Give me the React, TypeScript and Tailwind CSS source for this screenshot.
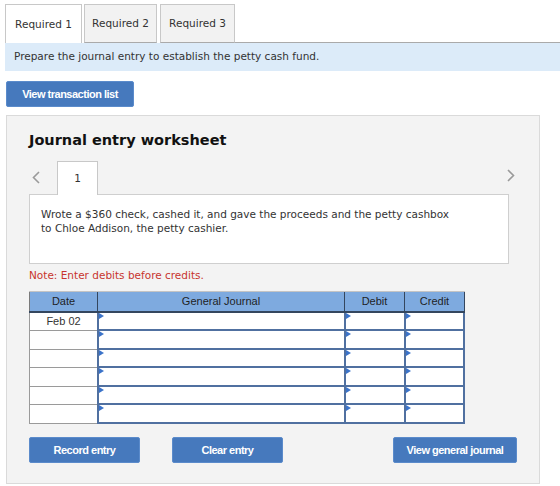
const rows = [0, 1, 2, 3, 4, 5];

// small blue marker in the corner of each entry cell
const Marker = () => (
  <span className="absolute left-0 top-0 w-0 h-0 border-t-[3px] border-b-[3px] border-l-[5px] border-t-transparent border-b-transparent border-l-[#3b73c9]" />
);

const Chevron = ({ dir }: { dir: 'left' | 'right' }) => (
  <svg width="8" height="13" viewBox="0 0 8 13" fill="none">
    <path
      d={dir === 'left' ? 'M7 1L1.5 6.5L7 12' : 'M1 1L6.5 6.5L1 12'}
      stroke="#9a9a9a"
      strokeWidth="1.6"
    />
  </svg>
);

const BlueButton = ({ label, className }: { label: string; className: string }) => (
  <button
    className={`h-[26px] rounded-[2px] bg-[#4679bd] border border-[#5b8bcb] text-white text-[11px] font-bold tracking-[-0.5px] font-['Liberation_Sans',Arial,sans-serif] ${className}`}
  >
    {label}
  </button>
);

export default function App() {
  return (
    <div className="w-[560px] h-[486px] bg-white overflow-hidden font-['DejaVu_Sans',Verdana,sans-serif] text-[#333]">
      {/* Tabs */}
      <div className="flex items-end h-[43px] pt-[4px] pl-[5px]">
        <div className="w-[77px] h-[39px] pt-[1px] bg-white border border-b-0 border-[#c8c8c8] flex items-center justify-center text-[10.5px]">
          Required 1
        </div>
        <div className="ml-[2px] w-[73px] h-[39px] pt-[1px] bg-[#f2f2f2] border border-[#c8c8c8] border-b-[#aaa] flex items-center justify-center text-[10.5px]">
          Required 2
        </div>
        <div className="ml-[3px] w-[75px] h-[39px] pt-[1px] bg-[#f2f2f2] border border-[#c8c8c8] border-b-[#aaa] flex items-center justify-center text-[10.5px]">
          Required 3
        </div>
        <div className="flex-1 h-[39px] border-b border-[#aaa]" />
      </div>

      {/* Instruction banner */}
      <div className="ml-[5px] h-[28px] bg-[#dcebf9] flex items-center pl-[9px] text-[10.5px] text-[#333]">
        Prepare the journal entry to establish the petty cash fund.
      </div>

      <BlueButton label="View transaction list" className="mt-[10px] ml-[6px] w-[128px]" />

      {/* Worksheet panel */}
      <div className="mt-[8px] ml-[6px] w-[534px] h-[369px] border border-[#dadada] bg-[#f3f3f3] pl-[22px] pt-[15px]">
        <div className="text-[14.5px] leading-[18px] font-bold text-[#111]">Journal entry worksheet</div>

        <div className="mt-[12px] flex items-end h-[33px] w-[480px] relative">
          <div className="w-[28px] h-full flex items-center pl-[3px]">
            <Chevron dir="left" />
          </div>
          <div className="relative z-10 mb-[-1px] w-[41px] h-[34px] bg-white border border-b-0 border-[#c8c8c8] flex items-center justify-center text-[10.5px]">
            1
          </div>
          <div className="absolute right-[-6px] top-[8px]">
            <Chevron dir="right" />
          </div>
        </div>

        <div className="w-[480px] h-[70px] bg-white border border-[#cfcfcf] pl-[11px] pt-[12px] text-[10.5px] leading-[14px] text-[#333]">
          Wrote a $360 check, cashed it, and gave the proceeds and the petty cashbox
          <br />
          to Chloe Addison, the petty cashier.
        </div>

        <div className="mt-[4px] text-[10.5px] leading-[14px] text-[#c8352f]">Note: Enter debits before credits.</div>

        {/* Journal table */}
        <div className="mt-[9px] w-[436px] font-['Liberation_Sans',Arial,sans-serif] text-[11px]">
          <div className="flex h-[22px] bg-[#7eaadf] border-t border-[#c4c4c4] border-b-2 border-b-[#34465e] text-[#1f1f1f]">
            <div className="w-[68px] flex items-center justify-center border-l border-[#7a7a7a]">Date</div>
            <div className="w-[247px] flex items-center justify-center border-l border-[#34465e]">General Journal</div>
            <div className="w-[60px] flex items-center justify-center border-l border-[#34465e]">Debit</div>
            <div className="w-[61px] flex items-center justify-center border-l border-r border-[#34465e]">Credit</div>
          </div>
          {rows.map((r) => (
            <div key={r} className={`flex ${r % 2 === 0 ? 'h-[18px]' : 'h-[19px]'}`}>
              <div className="w-[68px] bg-white border-l border-b border-[#9a9a9a] flex items-center justify-center text-[#333]">
                {r === 0 ? 'Feb 02' : ''}
              </div>
              <div className="relative w-[247px] bg-white border-l-2 border-b-2 border-[#5070a0]">
                <Marker />
              </div>
              <div className="relative w-[60px] bg-white border-l-2 border-b-2 border-[#5070a0]">
                <Marker />
              </div>
              <div className="relative w-[61px] bg-white border-l-2 border-r-2 border-b-2 border-[#5070a0]">
                <Marker />
              </div>
            </div>
          ))}
        </div>

        <div className="mt-[13px] flex">
          <BlueButton label="Record entry" className="w-[111px]" />
          <BlueButton label="Clear entry" className="ml-[32px] w-[111px]" />
          <BlueButton label="View general journal" className="ml-[110px] w-[124px]" />
        </div>
      </div>
    </div>
  );
}
